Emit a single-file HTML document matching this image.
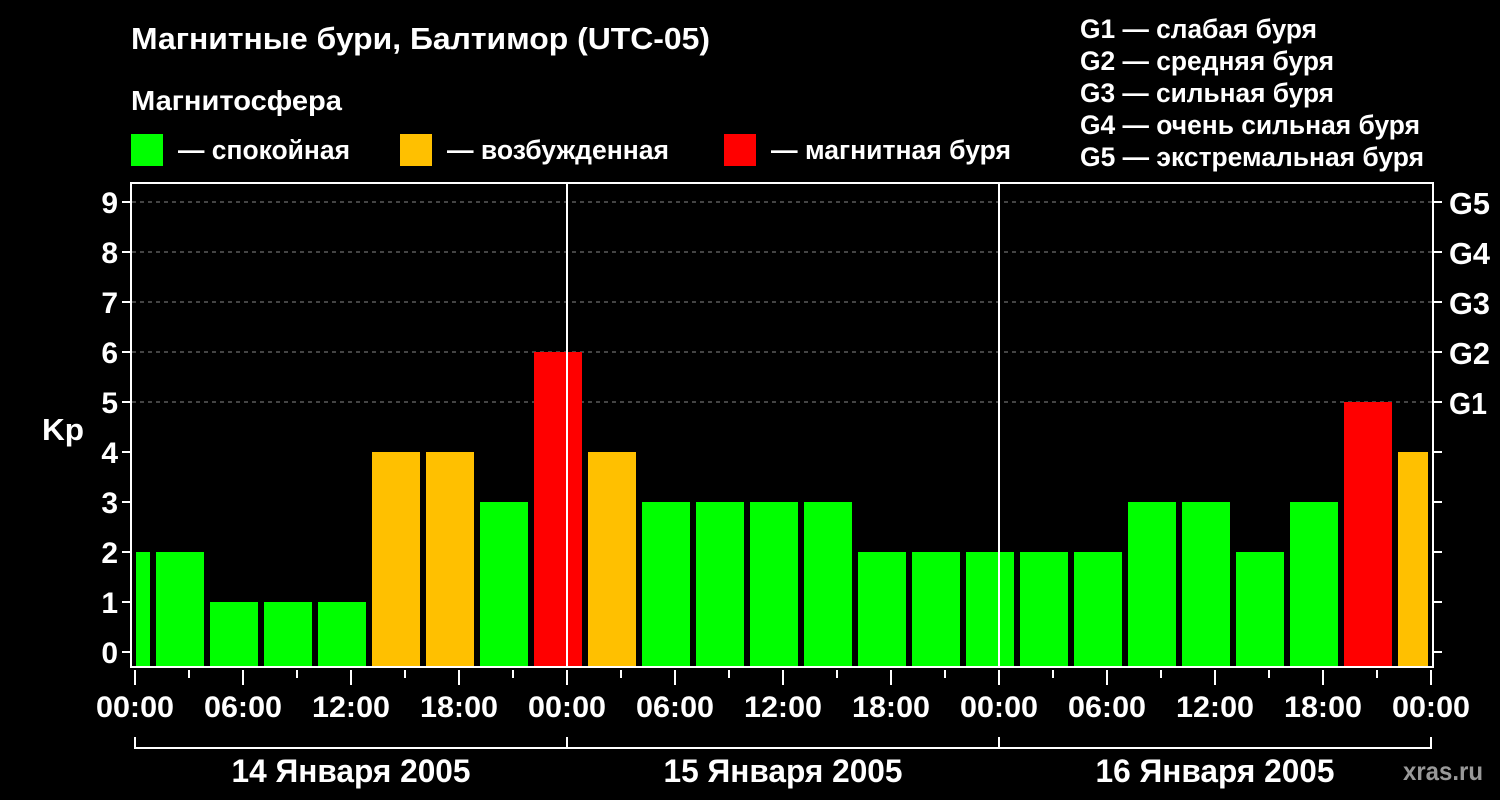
<!DOCTYPE html>
<html><head><meta charset="utf-8"><style>
html,body{margin:0;padding:0;background:#000;}
svg{display:block;font-family:"Liberation Sans",Arial,sans-serif;font-weight:bold;}
</style></head><body>
<svg width="1500" height="800" viewBox="0 0 1500 800" xmlns="http://www.w3.org/2000/svg">
<rect width="1500" height="800" fill="#000"/>
<g fill="#fff">
<text x="131" y="49" font-size="31" textLength="579" lengthAdjust="spacingAndGlyphs">Магнитные бури, Балтимор (UTC-05)</text>
<text x="131" y="110" font-size="28" textLength="211" lengthAdjust="spacingAndGlyphs">Магнитосфера</text>
<text x="178" y="159" font-size="27" textLength="172" lengthAdjust="spacingAndGlyphs">— спокойная</text>
<text x="447" y="159" font-size="27" textLength="222" lengthAdjust="spacingAndGlyphs">— возбужденная</text>
<text x="771" y="159" font-size="27" textLength="240" lengthAdjust="spacingAndGlyphs">— магнитная буря</text>
<text x="1080" y="38" font-size="27" textLength="237" lengthAdjust="spacingAndGlyphs">G1 — слабая буря</text>
<text x="1080" y="70" font-size="27" textLength="254" lengthAdjust="spacingAndGlyphs">G2 — средняя буря</text>
<text x="1080" y="102" font-size="27" textLength="254" lengthAdjust="spacingAndGlyphs">G3 — сильная буря</text>
<text x="1080" y="134" font-size="27" textLength="340" lengthAdjust="spacingAndGlyphs">G4 — очень сильная буря</text>
<text x="1080" y="166" font-size="27" textLength="344" lengthAdjust="spacingAndGlyphs">G5 — экстремальная буря</text>
</g>
<rect x="131" y="134" width="32" height="32" fill="#00ff00"/>
<rect x="400" y="134" width="32" height="32" fill="#ffc000"/>
<rect x="724" y="134" width="32" height="32" fill="#ff0000"/>
<g stroke="#888" stroke-width="1" stroke-dasharray="4,4">
<line x1="132" y1="202" x2="1432" y2="202"/>
<line x1="132" y1="252" x2="1432" y2="252"/>
<line x1="132" y1="302" x2="1432" y2="302"/>
<line x1="132" y1="352" x2="1432" y2="352"/>
<line x1="132" y1="402" x2="1432" y2="402"/>
</g>
<g>
<rect x="136" y="552" width="14" height="115" fill="#00ff00"/>
<rect x="156" y="552" width="48" height="115" fill="#00ff00"/>
<rect x="210" y="602" width="48" height="65" fill="#00ff00"/>
<rect x="264" y="602" width="48" height="65" fill="#00ff00"/>
<rect x="318" y="602" width="48" height="65" fill="#00ff00"/>
<rect x="372" y="452" width="48" height="215" fill="#ffc000"/>
<rect x="426" y="452" width="48" height="215" fill="#ffc000"/>
<rect x="480" y="502" width="48" height="165" fill="#00ff00"/>
<rect x="534" y="352" width="48" height="315" fill="#ff0000"/>
<rect x="588" y="452" width="48" height="215" fill="#ffc000"/>
<rect x="642" y="502" width="48" height="165" fill="#00ff00"/>
<rect x="696" y="502" width="48" height="165" fill="#00ff00"/>
<rect x="750" y="502" width="48" height="165" fill="#00ff00"/>
<rect x="804" y="502" width="48" height="165" fill="#00ff00"/>
<rect x="858" y="552" width="48" height="115" fill="#00ff00"/>
<rect x="912" y="552" width="48" height="115" fill="#00ff00"/>
<rect x="966" y="552" width="48" height="115" fill="#00ff00"/>
<rect x="1020" y="552" width="48" height="115" fill="#00ff00"/>
<rect x="1074" y="552" width="48" height="115" fill="#00ff00"/>
<rect x="1128" y="502" width="48" height="165" fill="#00ff00"/>
<rect x="1182" y="502" width="48" height="165" fill="#00ff00"/>
<rect x="1236" y="552" width="48" height="115" fill="#00ff00"/>
<rect x="1290" y="502" width="48" height="165" fill="#00ff00"/>
<rect x="1344" y="402" width="48" height="265" fill="#ff0000"/>
<rect x="1398" y="452" width="30" height="215" fill="#ffc000"/>
</g>
<g stroke="#fff" stroke-width="2" fill="none">
<rect x="131" y="183" width="1302" height="484"/>
<line x1="567" y1="183" x2="567" y2="667"/>
<line x1="999" y1="183" x2="999" y2="667"/>
<path d="M122 202H131M122 252H131M122 302H131M122 352H131M122 402H131M122 452H131M122 502H131M122 552H131M122 602H131M122 652H131"/>
<path d="M1433 202H1442M1433 252H1442M1433 302H1442M1433 352H1442M1433 402H1442M1433 452H1442M1433 502H1442M1433 552H1442M1433 602H1442M1433 652H1442"/>
<path d="M135 670V685M243 670V685M351 670V685M459 670V685M567 670V685M675 670V685M783 670V685M891 670V685M999 670V685M1107 670V685M1215 670V685M1323 670V685M1431 670V685"/>
<path d="M189 670V678M297 670V678M405 670V678M513 670V678M621 670V678M729 670V678M837 670V678M945 670V678M1053 670V678M1161 670V678M1269 670V678M1377 670V678"/>
<path d="M135 737V748H1431V737M567 737V748M999 737V748"/>
</g>
<g fill="#fff" font-size="30" text-anchor="end">
<text x="118" y="213">9</text><text x="118" y="263">8</text><text x="118" y="313">7</text>
<text x="118" y="363">6</text><text x="118" y="413">5</text><text x="118" y="463">4</text>
<text x="118" y="513">3</text><text x="118" y="563">2</text><text x="118" y="613">1</text>
<text x="118" y="663">0</text>
</g>
<text x="42" y="440" fill="#fff" font-size="31" textLength="42" lengthAdjust="spacingAndGlyphs">Kp</text>
<g fill="#fff" font-size="31">
<text x="1449" y="214" textLength="41" lengthAdjust="spacingAndGlyphs">G5</text><text x="1449" y="264" textLength="41" lengthAdjust="spacingAndGlyphs">G4</text><text x="1449" y="314" textLength="41" lengthAdjust="spacingAndGlyphs">G3</text>
<text x="1449" y="364" textLength="41" lengthAdjust="spacingAndGlyphs">G2</text><text x="1449" y="414" textLength="38" lengthAdjust="spacingAndGlyphs">G1</text>
</g>
<g fill="#fff" font-size="30" text-anchor="middle">
<text x="135" y="717" textLength="78" lengthAdjust="spacingAndGlyphs">00:00</text>
<text x="243" y="717" textLength="78" lengthAdjust="spacingAndGlyphs">06:00</text>
<text x="351" y="717" textLength="78" lengthAdjust="spacingAndGlyphs">12:00</text>
<text x="459" y="717" textLength="78" lengthAdjust="spacingAndGlyphs">18:00</text>
<text x="567" y="717" textLength="78" lengthAdjust="spacingAndGlyphs">00:00</text>
<text x="675" y="717" textLength="78" lengthAdjust="spacingAndGlyphs">06:00</text>
<text x="783" y="717" textLength="78" lengthAdjust="spacingAndGlyphs">12:00</text>
<text x="891" y="717" textLength="78" lengthAdjust="spacingAndGlyphs">18:00</text>
<text x="999" y="717" textLength="78" lengthAdjust="spacingAndGlyphs">00:00</text>
<text x="1107" y="717" textLength="78" lengthAdjust="spacingAndGlyphs">06:00</text>
<text x="1215" y="717" textLength="78" lengthAdjust="spacingAndGlyphs">12:00</text>
<text x="1323" y="717" textLength="78" lengthAdjust="spacingAndGlyphs">18:00</text>
<text x="1431" y="717" textLength="78" lengthAdjust="spacingAndGlyphs">00:00</text>
<text x="351" y="782" font-size="32" textLength="239" lengthAdjust="spacingAndGlyphs">14 Января 2005</text>
<text x="783" y="782" font-size="32" textLength="239" lengthAdjust="spacingAndGlyphs">15 Января 2005</text>
<text x="1215" y="782" font-size="32" textLength="239" lengthAdjust="spacingAndGlyphs">16 Января 2005</text>
</g>
<text x="1403" y="780" fill="#999" font-size="26" textLength="80" lengthAdjust="spacingAndGlyphs">xras.ru</text>
</svg>
</body></html>
